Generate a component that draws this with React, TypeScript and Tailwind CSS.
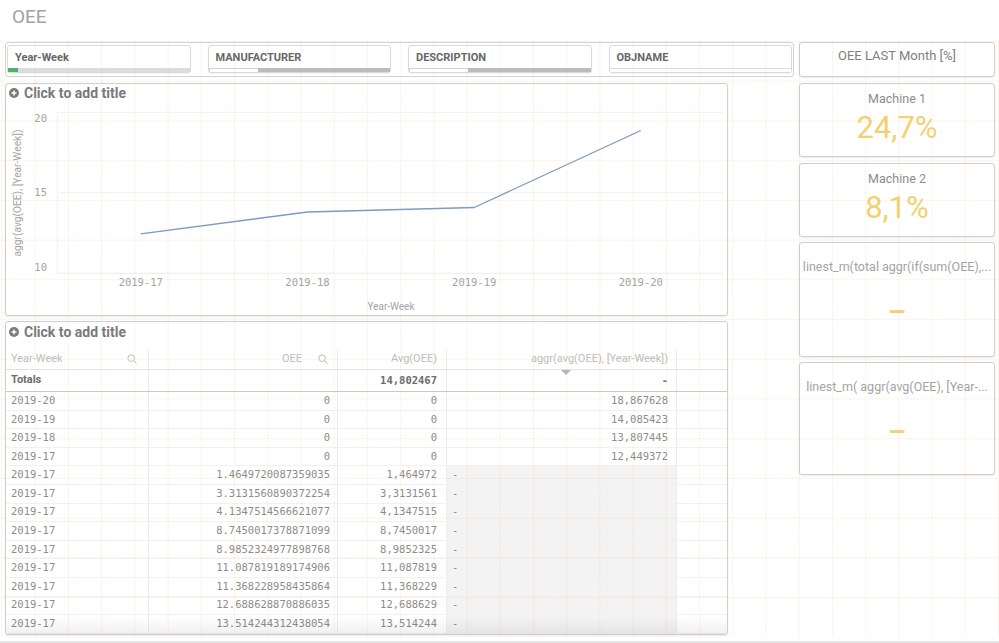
import React from 'react';

const sans = "font-['Roboto',sans-serif]";
const mono = "font-['DejaVu_Sans_Mono',monospace]";

const rows: [string, string, string, string | null][] = [
  ['2019-20', '0', '0', '18,867628'],
  ['2019-19', '0', '0', '14,085423'],
  ['2019-18', '0', '0', '13,807445'],
  ['2019-17', '0', '0', '12,449372'],
  ['2019-17', '1.4649720087359035', '1,464972', null],
  ['2019-17', '3.3131560890372254', '3,3131561', null],
  ['2019-17', '4.1347514566621077', '4,1347515', null],
  ['2019-17', '8.7450017378871099', '8,7450017', null],
  ['2019-17', '8.9852324977898768', '8,9852325', null],
  ['2019-17', '11.087819189174906', '11,087819', null],
  ['2019-17', '11.368228958435864', '11,368229', null],
  ['2019-17', '12.688628870886035', '12,688629', null],
  ['2019-17', '13.514244312438054', '13,514244', null],
];

const PlusCircle = () => (
  <svg width="10" height="10" viewBox="0 0 10 10">
    <circle cx="5" cy="5" r="5" fill="#7a7a7a" />
    <path d="M5 2.5v5M2.5 5h5" stroke="#fff" strokeWidth="1.5" />
  </svg>
);

const SearchIcon = () => (
  <svg width="10" height="10" viewBox="0 0 10 10" fill="none">
    <circle cx="4.2" cy="4.2" r="3.3" stroke="#bdbdbd" strokeWidth="1" />
    <path d="M6.6 6.6L9.5 9.5" stroke="#bdbdbd" strokeWidth="1" />
  </svg>
);

const PanelTitle = ({ className }: { className: string }) => (
  <div className={`flex items-center gap-[5px] pl-[3px] ${className}`}>
    <PlusCircle />
    <span className={`${sans} text-[14px] font-bold text-[#7a7a7a] leading-none`}>Click to add title</span>
  </div>
);

const FilterBox = ({ title, bar }: { title: string; bar: React.ReactNode }) => (
  <div className="flex-1 h-[28px] flex flex-col border border-[#dadada] rounded-[3px] bg-white shadow-[0_1px_1px_rgba(0,0,0,0.05)]">
    <div className={`${sans} pl-[7px] pt-[5px] h-[18px] text-[11px] font-bold leading-[14px] text-[#666]`}>{title}</div>
    <div className="mt-[4px] h-[4px] flex">{bar}</div>
  </div>
);

const FilterPane = () => (
  <div className="h-[35px] w-[789px] flex gap-[17px] px-[1px] pt-[2px] border border-[#d2d2d2] rounded-[3px] bg-white">
    <FilterBox
      title="Year-Week"
      bar={
        <>
          <div className="w-[10px] bg-[#52b06a]" />
          <div className="flex-1 bg-[#dcdcdc]" />
        </>
      }
    />
    <FilterBox
      title="MANUFACTURER"
      bar={
        <>
          <div className="w-[49px] border-t border-l border-[#d0d0d0] bg-white" />
          <div className="flex-1 bg-[#bcbcbc]" />
        </>
      }
    />
    <FilterBox
      title="DESCRIPTION"
      bar={
        <>
          <div className="w-[59px] border-t border-l border-[#d0d0d0] bg-white" />
          <div className="flex-1 bg-[#bcbcbc]" />
        </>
      }
    />
    <FilterBox title="OBJNAME" bar={<div className="flex-1 border-t border-[#dadada] bg-white" />} />
  </div>
);

const xs = [134.8, 301.5, 468.2, 634.8];
const vals = [12.449372, 13.807445, 14.085423, 18.867628];
const yOf = (v: number) => 170.3 - (v - 10) * 16.1;

const ChartPanel = () => (
  <div className="mt-[6px] w-[723px] h-[233px] flex flex-col border border-[#cfcfcf] rounded-[3px] bg-white shadow-[0_1px_2px_rgba(0,0,0,0.08)]">
    <PanelTitle className="h-[18px]" />
    <svg width="721" height="212" viewBox="0 0 721 212" className="mt-[1px]">
      <line x1="51.3" y1="9.3" x2="718" y2="9.3" stroke="#f0f0f0" />
      <line x1="51.3" y1="89.8" x2="718" y2="89.8" stroke="#f0f0f0" />
      <line x1="51.3" y1="170.3" x2="718" y2="170.3" stroke="#ececec" />
      <line x1="51.3" y1="9.3" x2="51.3" y2="170.3" stroke="#f2f2f2" />
      {[
        ['20', 15],
        ['15', 89],
        ['10', 163.7],
      ].map(([t, y]) => (
        <text key={t} x="41" y={y} textAnchor="end" dominantBaseline="central" fontFamily="DejaVu Sans Mono, monospace" fontSize="10.5" fill="#a3a3a3">
          {t}
        </text>
      ))}
      {['2019-17', '2019-18', '2019-19', '2019-20'].map((t, i) => (
        <text key={t} x={xs[i]} y="178.7" textAnchor="middle" dominantBaseline="central" fontFamily="DejaVu Sans Mono, monospace" fontSize="10.5" fill="#a3a3a3">
          {t}
        </text>
      ))}
      <text x="385" y="203" textAnchor="middle" dominantBaseline="central" fontFamily="Roboto, sans-serif" fontSize="10" fill="#a3a3a3">
        Year-Week
      </text>
      <text x="11" y="90" textAnchor="middle" dominantBaseline="central" fontFamily="Roboto, sans-serif" fontSize="10.2" fill="#a3a3a3" transform="rotate(-90 11 90)">
        aggr(avg(OEE), [Year-Week])
      </text>
      <polyline
        points={xs.map((x, i) => `${x},${yOf(vals[i])}`).join(' ')}
        fill="none"
        stroke="#7d9ac3"
        strokeWidth="1.3"
        strokeLinejoin="round"
      />
    </svg>
  </div>
);

const TablePanel = () => (
  <div className="mt-[5px] w-[723px] h-[314px] flex flex-col border border-[#cfcfcf] rounded-[3px] bg-white shadow-[0_1px_2px_rgba(0,0,0,0.08)] overflow-hidden">
    <PanelTitle className="h-[20px]" />
    <div className="h-[7px]" />
    {/* header */}
    <div className={`${sans} flex h-[21px] border-b border-[#e2e2e2] text-[11px] text-[#bdbdbd]`}>
      <div className="w-[143px] flex items-center justify-between pl-[5px] pr-[11px] border-r border-[#ececec]">
        <span>Year-Week</span>
        <SearchIcon />
      </div>
      <div className="w-[189px] flex items-center justify-end gap-[16px] pr-[9px] border-r border-[#ececec]">
        <span>OEE</span>
        <SearchIcon />
      </div>
      <div className="w-[109px] flex items-center justify-end pr-[9px] border-r border-[#ececec]">Avg(OEE)</div>
      <div className="w-[230px] flex items-center justify-end pr-[8px] border-r border-[#ececec]">aggr(avg(OEE), [Year-Week])</div>
      <div className="flex-1" />
    </div>
    {/* totals */}
    <div className="flex h-[22px] border-b border-[#c9c9c9] text-[11px] font-bold text-[#6b6b6b]">
      <div className={`${sans} w-[143px] flex items-center pl-[5px] border-r border-[#ececec]`}>Totals</div>
      <div className="w-[189px] border-r border-[#ececec]" />
      <div className={`${mono} w-[109px] flex items-center justify-end pr-[9px] border-r border-[#ececec] text-[10.5px]`}>14,802467</div>
      <div className={`${mono} relative w-[230px] flex items-center justify-end pr-[8px] border-r border-[#ececec] text-[10.5px]`}>
        <span className="absolute top-0 left-[114px] w-0 h-0 border-l-[5px] border-r-[5px] border-t-[5px] border-l-transparent border-r-transparent border-t-[#b5b5b5]" />
        -
      </div>
      <div className="flex-1" />
    </div>
    {/* body */}
    <div className={`${mono} relative flex-1 text-[10.5px] text-[#8c8c8c]`}>
      {rows.map((r, i) => (
        <div key={i} className="flex h-[18.6px] border-b border-[#f1f1f1]">
          <div className="w-[143px] flex items-center pl-[5px] border-r border-[#ececec]">{r[0]}</div>
          <div className="w-[189px] flex items-center justify-end pr-[7px] border-r border-[#ececec]">{r[1]}</div>
          <div className="w-[109px] flex items-center justify-end pr-[9px] border-r border-[#ececec]">{r[2]}</div>
          {r[3] ? (
            <div className="w-[230px] flex items-center justify-end pr-[8px] border-r border-[#ececec]">{r[3]}</div>
          ) : (
            <div className="w-[230px] flex items-center pl-[5px] bg-[#f3f3f3] border-r border-[#ececec]">-</div>
          )}
          <div className="flex-1" />
        </div>
      ))}
      <div className="absolute left-0 right-0 bottom-0 h-[18px] bg-gradient-to-b from-transparent to-[rgba(0,0,0,0.06)] pointer-events-none" />
    </div>
  </div>
);

const Box = ({ className, children }: { className: string; children?: React.ReactNode }) => (
  <div className={`border border-[#cfcfcf] rounded-[3px] bg-white shadow-[0_1px_2px_rgba(0,0,0,0.08)] flex flex-col items-center overflow-hidden ${className}`}>
    {children}
  </div>
);

const Kpi = ({ label, value, className }: { label: string; value: string; className: string }) => (
  <Box className={`h-[74px] pt-[7px] ${className}`}>
    <div className={`${sans} text-[12.5px] leading-[15px] text-[#8c8c8c]`}>{label}</div>
    <div className={`${sans} mt-[6px] text-[31px] leading-[32px] text-[#f1d272]`}>{value}</div>
  </Box>
);

const Linest = ({ label, className }: { label: string; className: string }) => (
  <Box className={`pt-[16px] ${className}`}>
    <div className={`${sans} w-full whitespace-nowrap text-center text-[12.5px] leading-[16px] text-[#a3a3a3]`}>{label}</div>
    <div className={`${sans} mt-[21px] text-[29px] font-medium leading-[32px] text-[#f1d272]`}>–</div>
  </Box>
);

export default function App() {
  return (
    <div className="w-[999px] h-[643px] bg-white overflow-hidden flex flex-col">
      <header className={`${sans} h-[40px] pl-[12px] pt-[7px] text-[19px] leading-[19px] text-[#a3a3a3]`}>OEE</header>
      <main className="relative h-[597px] flex gap-[5px] pl-[5px] pt-[2px]">
        <div className="w-[789px] flex flex-col">
          <FilterPane />
          <ChartPanel />
          <TablePanel />
        </div>
        <div className="w-[196px] flex flex-col">
          <Box className="h-[35px] pt-[5px]">
            <div className={`${sans} text-[13px] leading-[16px] text-[#808080]`}>OEE LAST Month [%]</div>
          </Box>
          <Kpi className="mt-[6px]" label="Machine 1" value="24,7%" />
          <Kpi className="mt-[6px]" label="Machine 2" value="8,1%" />
          <Linest className="mt-[5px] h-[115px]" label="linest_m(total aggr(if(sum(OEE),..." />
          <Linest className="mt-[5px] h-[113px]" label="linest_m( aggr(avg(OEE), [Year-..." />
        </div>
        <div className="absolute inset-0 pointer-events-none bg-[linear-gradient(to_right,rgba(249,160,70,0.12)_1px,transparent_1px),linear-gradient(to_bottom,rgba(249,160,70,0.12)_1px,transparent_1px)] bg-[size:33.23px_39.73px] bg-[position:1.5px_1px]" />
      </main>
      <div className="h-[4px]" />
      <div className="h-[2px] bg-[#e6e6e6]" />
    </div>
  );
}
